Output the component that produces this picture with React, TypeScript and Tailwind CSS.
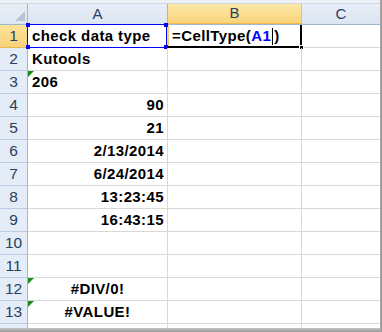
import React from 'react';

type Row = {
  a: string;
  align: 'left' | 'right' | 'center';
  flag?: boolean;
};

const rows: Row[] = [
  { a: 'check data type', align: 'left' },
  { a: 'Kutools', align: 'left' },
  { a: '206', align: 'left', flag: true },
  { a: '90', align: 'right' },
  { a: '21', align: 'right' },
  { a: '2/13/2014', align: 'right' },
  { a: '6/24/2014', align: 'right' },
  { a: '13:23:45', align: 'right' },
  { a: '16:43:15', align: 'right' },
  { a: '', align: 'left' },
  { a: '', align: 'left' },
  { a: '#DIV/0!', align: 'center', flag: true },
  { a: '#VALUE!', align: 'center', flag: true },
];

const alignClass = {
  left: 'justify-start pl-[4px]',
  right: 'justify-end pr-[3px]',
  center: 'justify-center',
};

function Flag() {
  return (
    <svg className="absolute left-0 top-0" width="6" height="6" viewBox="0 0 6 6">
      <polygon points="0,0 6,0 0,6" fill="#1a8a1a" />
    </svg>
  );
}

function CornerSquare({ pos }: { pos: string }) {
  return <div className={`absolute w-[4px] h-[4px] bg-[#0000ff] ${pos}`} />;
}

export default function App() {
  return (
    <div className="w-[382px] h-[332px] flex bg-white font-['Liberation_Sans',Arial,sans-serif] overflow-hidden">
      <div className="w-[380px] flex flex-col">
        {/* top band */}
        <div className="h-[4px] bg-[#eef1f5] border-b border-[#cfd8e4]" />

        {/* column headers */}
        <div className="flex h-[21px] border-b border-[#9eb6ce]">
          <div className="w-[28px] relative bg-gradient-to-b from-[#e9eff7] to-[#dde6f2] border-r border-[#9eb6ce]">
            <svg className="absolute right-[2px] bottom-[3px]" width="10" height="10" viewBox="0 0 10 10">
              <polygon points="10,0 10,10 0,10" fill="#b9c4d3" />
            </svg>
          </div>
          <div className="w-[140px] flex items-center justify-center text-[15px] text-[#27415f] bg-gradient-to-b from-[#e9eff7] to-[#dbe5f2] border-r border-[#9eb6ce]">
            A
          </div>
          <div className="w-[134px] flex items-center justify-center text-[15px] text-[#27415f] bg-gradient-to-b from-[#fde9a8] to-[#f9d47a] border-r border-[#f0c05a] border-b border-b-[#f2b74a]">
            B
          </div>
          <div className="w-[78px] flex items-center justify-center text-[15px] text-[#27415f] bg-gradient-to-b from-[#e9eff7] to-[#dbe5f2]">
            C
          </div>
        </div>

        {/* rows */}
        {rows.map((r, i) => (
          <div key={i} className="flex h-[23px] border-b border-[#d8d8d8]">
            <div
              className={`w-[28px] -mb-px flex items-center justify-center text-[15.5px] text-[#27415f] border-r border-[#9eb6ce] border-b ${
                i === 0
                  ? 'bg-gradient-to-b from-[#fbe29a] to-[#f8d27a] border-b-[#e9b856]'
                  : 'bg-[#e4ecf7] border-b-[#b8cce4]'
              }`}
            >
              {i + 1}
            </div>
            <div
              className={`w-[140px] relative flex items-center text-[15px] font-bold tracking-[0.4px] text-black border-r border-[#d8d8d8] ${alignClass[r.align]}`}
            >
              {r.flag && <Flag />}
              {i === 0 && (
                <div className="absolute -left-px -top-px right-0 -bottom-px border-[1.5px] border-[#0000ff]">
                  <CornerSquare pos="-left-[2px] -top-[2px]" />
                  <CornerSquare pos="-right-[2px] -top-[2px]" />
                  <CornerSquare pos="-left-[2px] -bottom-[2px]" />
                  <CornerSquare pos="-right-[2px] -bottom-[2px]" />
                </div>
              )}
              <span className="relative whitespace-nowrap">{r.a}</span>
            </div>
            <div className="w-[134px] relative flex items-center pl-[4px] text-[15px] font-bold tracking-[0.4px] text-black border-r border-[#d8d8d8]">
              {i === 0 && (
                <>
                  <div className="absolute left-0 top-0 bottom-[-1px] w-[1px] bg-[#f0d060]" />
                  <div className="absolute right-[-1px] top-0 bottom-[-1px] w-[2px] bg-black" />
                  <div className="absolute left-0 right-[-1px] bottom-[-1px] h-[2px] bg-black" />
                  <div className="absolute right-[-3px] bottom-[-3px] w-[5px] h-[5px] bg-black border border-white" />
                  <span className="whitespace-nowrap">
                    =CellType(<span className="text-[#0000ff]">A1</span>
                    <span className="inline-block w-px h-[17px] bg-black align-middle mx-[1px]" />)
                  </span>
                </>
              )}
            </div>
            <div className="w-[78px]" />
          </div>
        ))}

        {/* partial row 14 */}
        <div className="flex h-[4px]">
          <div className="w-[28px] bg-[#e4ecf7] border-r border-[#9eb6ce]" />
          <div className="w-[140px] border-r border-[#d8d8d8]" />
          <div className="w-[134px] border-r border-[#d8d8d8]" />
          <div className="w-[78px]" />
        </div>
        <div className="flex-1 bg-gradient-to-b from-[#c4c4c4] to-[#9a9a9a]" />
      </div>
      <div className="w-[2px] bg-gradient-to-r from-[#b0b0b0] to-[#8f8f8f]" />
    </div>
  );
}
